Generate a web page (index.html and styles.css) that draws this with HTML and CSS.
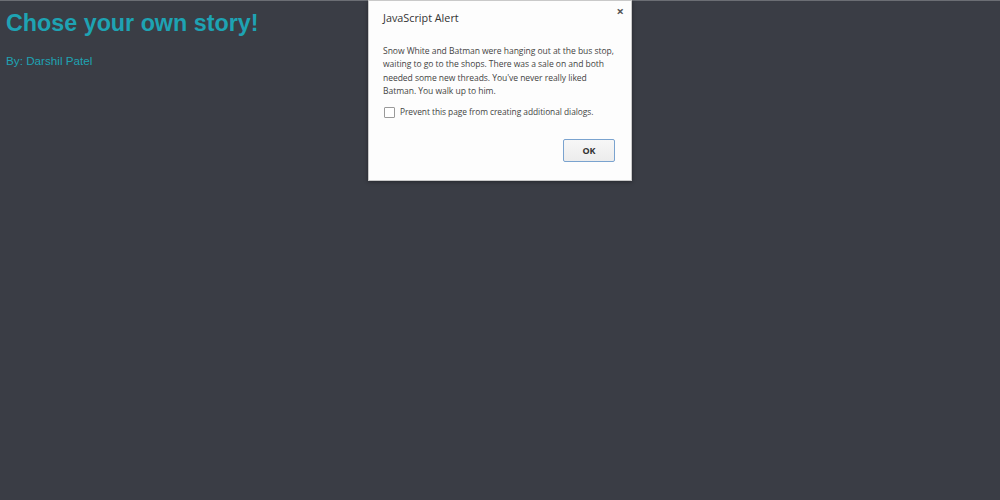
FILE: index.html
```html
<!DOCTYPE html>
<html>
<head>
<meta charset="utf-8">
<link rel="stylesheet" href="styles.css">
</head>
<body>
<div class="page">
  <h1 class="title">Chose your own story!</h1>
  <p class="byline">By: Darshil Patel</p>
</div>
<div class="dialog">
  <div class="dialog-head">
    <span class="dialog-title">JavaScript Alert</span>
    <span class="close">×</span>
  </div>
  <p class="message">Snow White and Batman were hanging out at the bus stop,<br>waiting to go to the shops. There was a sale on and both<br>needed some new threads. You've never really liked<br>Batman. You walk up to him.</p>
  <label class="prevent"><span class="box"></span>Prevent this page from creating additional dialogs.</label>
  <div class="actions"><button class="ok">OK</button></div>
</div>
</body>
</html>
```
FILE: styles.css
```css
html, body {
  margin: 0;
  height: 100%;
}
body {
  background: #3a3d45;
  border-top: 1px solid #6b6e74;
  box-sizing: border-box;
  font-family: "Liberation Sans", Arial, sans-serif;
}
.page {
  padding: 7px 6px;
}
.title {
  margin: 0;
  font-size: 23.3px;
  font-weight: bold;
  color: #1ea3b3;
  line-height: 30px;
}
.byline {
  margin: 16px 0 0;
  font-size: 11.7px;
  color: #1ea3b3;
  line-height: 14px;
}
.dialog {
  position: absolute;
  top: 0;
  left: 368px;
  width: 264px;
  height: 181px;
  box-sizing: border-box;
  background: #fdfdfd;
  border: 1px solid #c9c9c9;
  box-shadow: 0 1px 4px rgba(0,0,0,0.35);
  padding: 0 15px 0 14px;
  font-family: "Open Sans", "Noto Sans", sans-serif;
  color: #333;
}
.dialog-head {
  display: flex;
  justify-content: space-between;
  align-items: flex-start;
  padding-top: 9px;
  height: 34px;
  box-sizing: border-box;
}
.dialog-title {
  font-size: 10.8px;
  color: #333;
  line-height: 16px;
}
.close {
  font-size: 13px;
  line-height: 12px;
  color: #555;
  margin-right: -8px;
  margin-top: -5px;
  font-weight: bold;
}
.message {
  margin: 10px 0 0;
  font-size: 8.55px;
  line-height: 13.3px;
  color: #444;
  letter-spacing: -0.05px;
}
.prevent {
  display: flex;
  align-items: center;
  margin-top: 8px;
  font-size: 8.4px;
  letter-spacing: -0.05px;
  color: #444;
  line-height: 12px;
}
.box {
  width: 9px;
  height: 9px;
  border: 1px solid #9a9a9a;
  border-radius: 1px;
  margin: 0 5px 0 1px;
  background: #fff;
}
.actions {
  display: flex;
  justify-content: flex-end;
  margin-top: 21px;
  margin-right: 1px;
}
.ok {
  width: 52px;
  height: 23px;
  border: 1px solid #7aa3cf;
  border-radius: 2px;
  background: linear-gradient(#f7f7f7, #ececec);
  font-family: "Open Sans", "Noto Sans", sans-serif;
  font-size: 9px;
  font-weight: bold;
  color: #333;
  padding: 0;
}
```
